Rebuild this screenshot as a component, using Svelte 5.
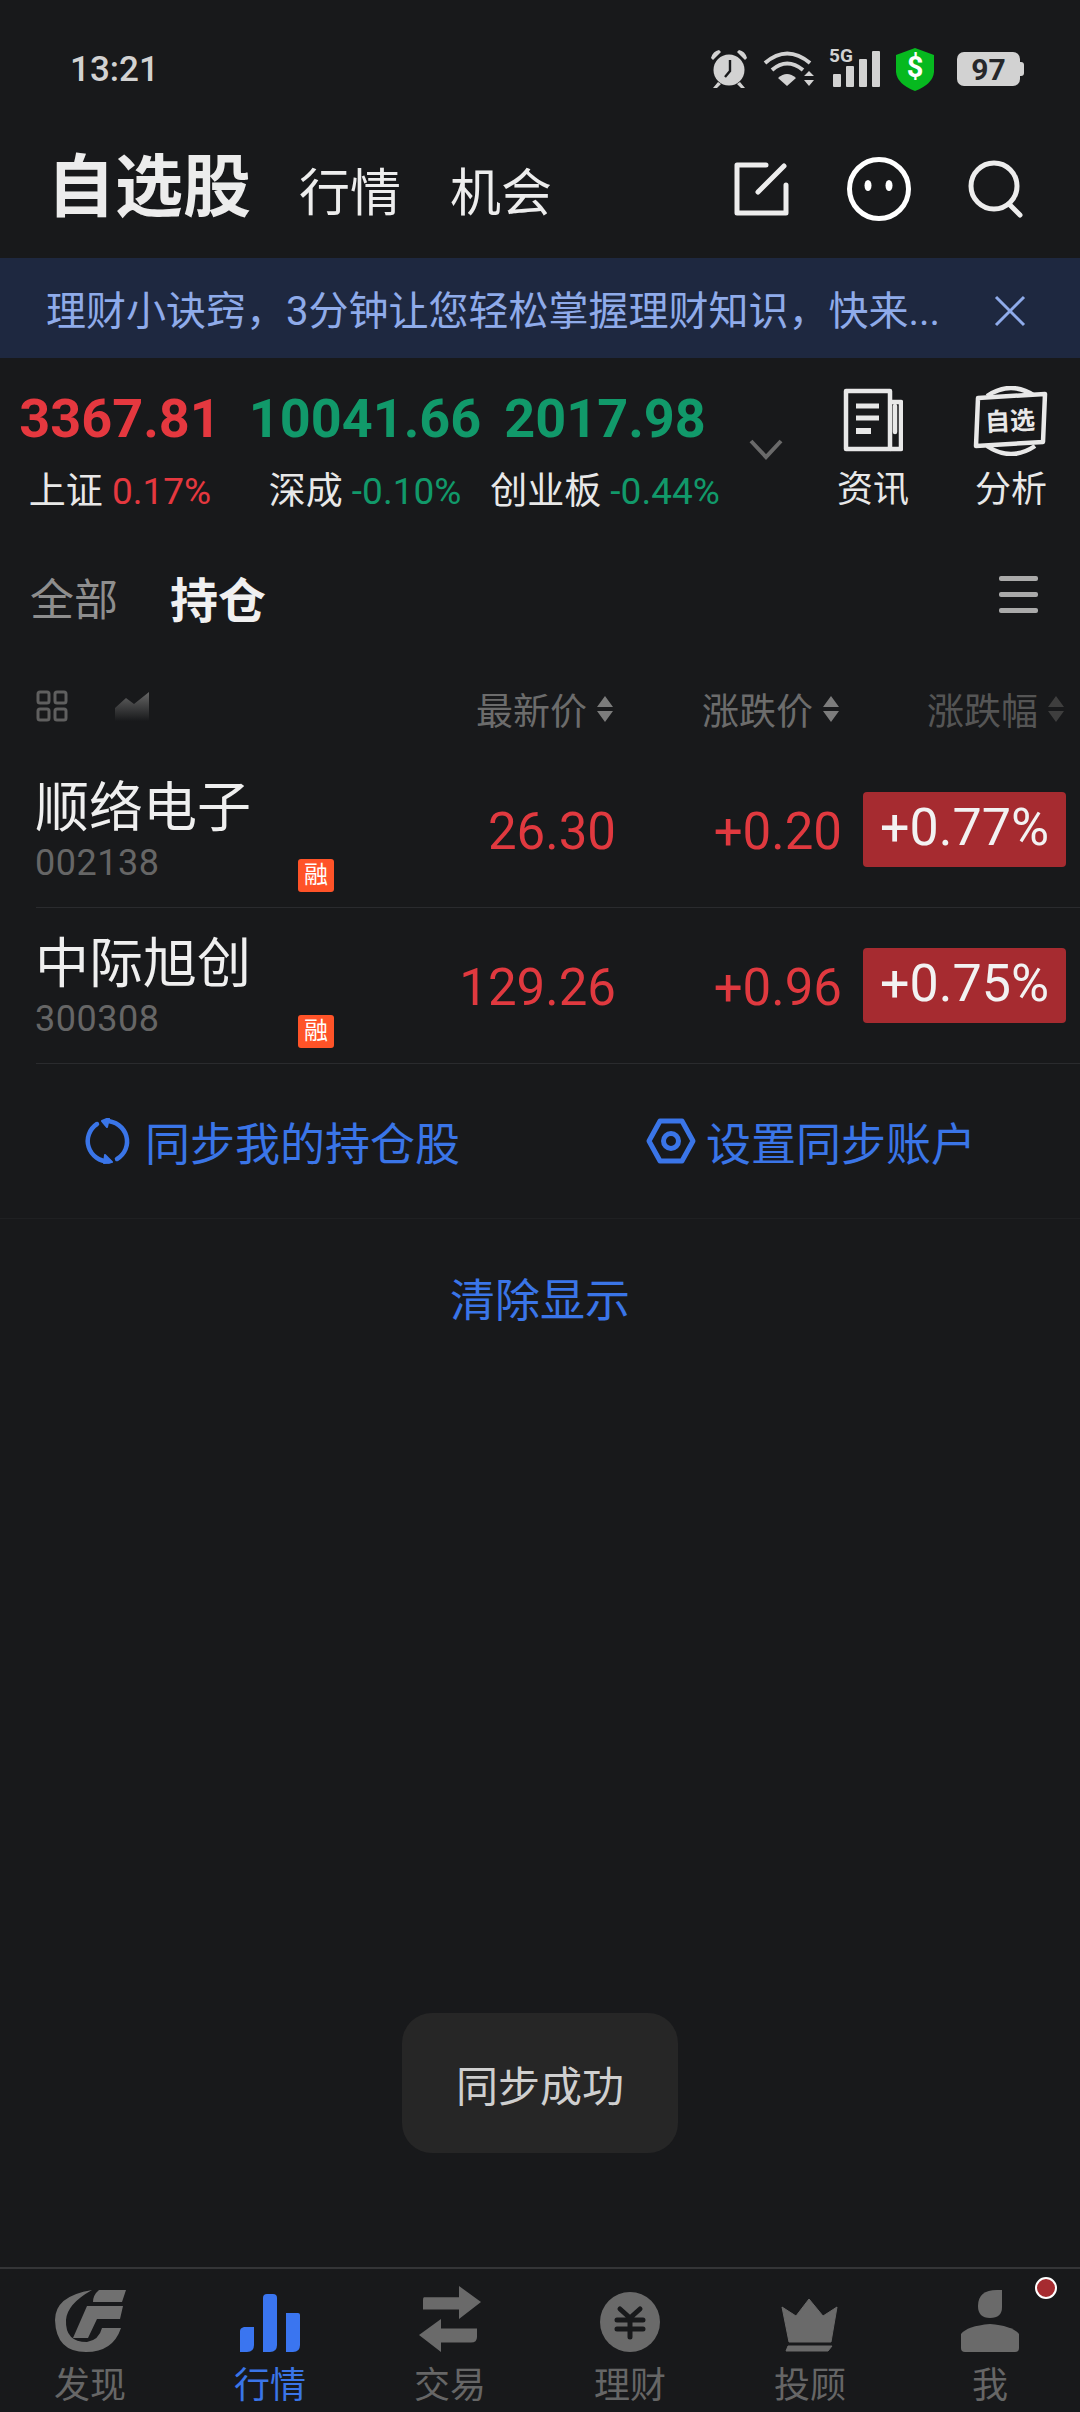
<script>
  const indices = [
    { value: '3367.81', name: '上证', pct: '0.17%', tone: 'up' },
    { value: '10041.66', name: '深成', pct: '-0.10%', tone: 'down' },
    { value: '2017.98', name: '创业板', pct: '-0.44%', tone: 'down' }
  ];
  const stocks = [
    { name: '顺络电子', code: '002138', price: '26.30', change: '+0.20', pct: '+0.77%' },
    { name: '中际旭创', code: '300308', price: '129.26', change: '+0.96', pct: '+0.75%' }
  ];
  const columns = ['最新价', '涨跌价', '涨跌幅'];
</script>

<div class="phone">
  <div class="status">
    <span class="time">13:21</span>
    <div class="status-icons">
      <svg width="38" height="40" viewBox="0 0 38 40" fill="#d2d2d2">
        <circle cx="19" cy="21" r="15.5" />
        <path d="M1 9 Q3 2 9 1 L11 3 L3 11Z M37 9 Q35 2 29 1 L27 3 L35 11Z" />
        <path d="M8 33 L3 39 L7 39 L11 35Z M30 33 L35 39 L31 39 L27 35Z" />
        <path d="M20 11 V22 L15 28" fill="none" stroke="#18191b" stroke-width="2.4" />
      </svg>
      <svg class="wifi" width="52" height="38" viewBox="0 0 52 38" fill="none" stroke="#d2d2d2" stroke-width="4">
        <path d="M2 13 Q24 -6 47 13" />
        <path d="M9 20 Q24 7 40 20" />
        <path d="M24 36 L15 28 Q24 20 33 28Z" fill="#d2d2d2" stroke="none" />
        <path d="M41 26 L46 21 L51 26Z M41 30 L51 30 L46 36Z" fill="#d2d2d2" stroke="none" />
      </svg>
      <div class="signal">
        <span class="five-g">5G</span>
        <i style="height:13px"></i><i style="height:21px"></i><i style="height:28px"></i><i style="height:36px"></i>
      </div>
      <svg class="shield" width="38" height="43" viewBox="0 0 38 43">
        <path d="M19 0 L38 7 V24 Q37 36 19 43 Q1 36 0 24 V7Z" fill="#06b91f" />
        <text x="19" y="29" text-anchor="middle" class="dollar">$</text>
      </svg>
      <div class="battery"><span>97</span></div>
    </div>
  </div>

  <header class="top">
    <h1>自选股</h1>
    <nav>
      <span>行情</span>
      <span>机会</span>
    </nav>
    <div class="top-icons">
      <svg width="56" height="54" viewBox="0 0 56 54" fill="none" stroke="#ededed" stroke-width="5" stroke-linecap="round" stroke-linejoin="round">
        <path d="M32 3 H3 V51 H52 V23" />
        <path d="M24 30 L50 4" />
      </svg>
      <svg class="face" width="66" height="66" viewBox="0 0 66 66">
        <circle cx="33" cy="33" r="29.5" fill="none" stroke="#fff" stroke-width="5" />
        <ellipse cx="22" cy="29.5" rx="3.5" ry="5.5" fill="#fff" />
        <ellipse cx="43" cy="29.5" rx="3.5" ry="5.5" fill="#fff" />
      </svg>
      <svg class="search" width="56" height="58" viewBox="0 0 56 58" fill="none" stroke="#ededed" stroke-width="5" stroke-linecap="round">
        <circle cx="26" cy="26" r="23" />
        <path d="M42 45 L52 55" />
      </svg>
    </div>
  </header>

  <div class="notice">
    <span class="notice-text">理财小诀窍，3分钟让您轻松掌握理财知识，快来...</span>
    <svg width="32" height="32" viewBox="0 0 32 32" fill="none" stroke="#8fabea" stroke-width="3">
      <path d="M2 2 L30 30 M30 2 L2 30" />
    </svg>
  </div>

  <section class="market">
    <div class="index-grid">
      {#each indices as item}
        <div class="index">
          <span class="value {item.tone}">{item.value}</span>
          <span class="label">{item.name} <em class={item.tone}>{item.pct}</em></span>
        </div>
      {/each}
    </div>
    <svg class="chevron" width="34" height="22" viewBox="0 0 34 22" fill="none" stroke="#6a6a6a" stroke-width="4">
      <path d="M2 3 L17 19 L32 3" />
    </svg>
    <div class="shortcut news">
      <svg width="60" height="64" viewBox="0 0 60 64" fill="none" stroke="#e8e8e8" stroke-width="4.5" stroke-linejoin="round">
        <path d="M3 3 H47 V61 H3Z" />
        <path d="M47 14 H58 V61 H47" />
        <path d="M52 18 V44" stroke-linecap="round" />
        <path d="M13 18 H36 M13 30 H36" stroke-width="5" />
        <path d="M13 43 H28" stroke-width="6" />
      </svg>
      <span>资讯</span>
    </div>
    <div class="shortcut">
      <svg width="76" height="70" viewBox="0 0 76 70" fill="none" stroke="#e8e8e8" stroke-width="4.5">
        <path d="M14 10 Q38 -6 62 10" />
        <path d="M14 60 Q38 76 62 60" />
        <path d="M5 12 L72 8 L70 56 L3 60Z" fill="#18191b" stroke-linejoin="round" />
        <text x="37" y="44" text-anchor="middle" class="badge-text" transform="rotate(-3 37 35)">自选</text>
      </svg>
      <span>分析</span>
    </div>
  </section>

  <div class="tabs">
    <span class="tab">全部</span>
    <span class="tab active">持仓</span>
    <div class="menu"><i></i><i></i><i></i></div>
  </div>

  <div class="table-head">
    <div class="head-tools">
      <svg width="32" height="32" viewBox="0 0 32 32" fill="none" stroke="#5f5f5f" stroke-width="3">
        <rect x="2" y="2" width="11" height="11" rx="2" />
        <rect x="19" y="2" width="11" height="11" rx="2" />
        <rect x="2" y="19" width="11" height="11" rx="2" />
        <rect x="19" y="19" width="11" height="11" rx="2" />
      </svg>
      <svg width="34" height="30" viewBox="0 0 34 30">
        <defs>
          <linearGradient id="spark" x1="0" y1="0" x2="0" y2="1">
            <stop offset="0" stop-color="#666" />
            <stop offset="1" stop-color="#666" stop-opacity="0" />
          </linearGradient>
        </defs>
        <path d="M0 17 L11 7 L19 13 L34 1 V30 H0Z" fill="url(#spark)" />
      </svg>
    </div>
    {#each columns as col, i}
      <div class="sort" class:dim={i === 2}>
        <span>{col}</span>
        <svg width="18" height="28" viewBox="0 0 18 28" fill="currentColor">
          <path d="M9 1 L17 12 H1Z M1 16 H17 L9 27Z" />
        </svg>
      </div>
    {/each}
  </div>

  {#each stocks as s}
    <div class="row">
      <div class="stock">
        <span class="stock-name">{s.name}</span>
        <span class="stock-code">{s.code}</span>
        <span class="rong">融</span>
      </div>
      <span class="num">{s.price}</span>
      <span class="num">{s.change}</span>
      <span class="pill">{s.pct}</span>
    </div>
  {/each}

  <div class="actions">
    <div class="action">
      <svg width="48" height="46" viewBox="0 0 48 46" fill="none" stroke="#3a75e8" stroke-width="4.5" stroke-linecap="round">
        <path d="M22 3 A21 20.5 0 0 1 33 41" />
        <path d="M13 6 A21 20.5 0 0 0 25 43.5" />
        <path d="M18 3 L25 0 L23 9Z M28 44 L21 37 L20 45Z" fill="#3a75e8" stroke-width="2" stroke-linejoin="round" />
      </svg>
      <span>同步我的持仓股</span>
    </div>
    <div class="action second">
      <svg width="50" height="46" viewBox="0 0 50 46" fill="none" stroke="#3a75e8" stroke-width="5" stroke-linejoin="round">
        <path d="M14 3 H36 L47 23 L36 43 H14 L3 23Z" />
        <circle cx="25" cy="23" r="7.5" />
      </svg>
      <span>设置同步账户</span>
    </div>
  </div>

  <div class="clear">清除显示</div>

  <div class="toast">同步成功</div>

  <nav class="tabbar">
    <div class="tabitem">
      <svg width="71" height="62" viewBox="0 0 71 62" fill="#707070">
        <path d="M37 0 Q0 6 0 30 Q1 62 31 62 Q58 62 66 38 H47 Q44 50 32 52 Q10 52 11 30 Q12 14 37 0Z" />
        <path d="M44 0 H71 L67 12 H38 Q38 5 44 0Z" />
        <path d="M32 16 H68 L65 29 H42 L33 48 H18Z" />
      </svg>
      <span>发现</span>
    </div>
    <div class="tabitem current">
      <svg width="60" height="58" viewBox="0 0 60 58" fill="#3a75f0">
        <path d="M0 37 Q0 34 4 33 L14 33 V51 Q14 58 7 58 H0Z" />
        <path d="M23 4 Q23 0 27 0 H33 Q37 0 37 4 V51 Q37 58 30 58 H23Z" />
        <path d="M46 19 H58 Q60 19 60 21 V51 Q60 58 53 58 H46Z" />
      </svg>
      <span>行情</span>
    </div>
    <div class="tabitem">
      <svg width="62" height="66" viewBox="0 0 62 70" preserveAspectRatio="none" fill="#6a6a6a">
        <path d="M5 12 H40 V0 L62 17 L40 35 V25 H4 V15 Q4 12 5 12Z" />
        <path d="M57 45 H22 V35 L0 52 L22 70 V60 H52 Q58 60 58 54 V45Z" />
      </svg>
      <span>交易</span>
    </div>
    <div class="tabitem">
      <svg width="60" height="60" viewBox="0 0 60 60">
        <circle cx="30" cy="30" r="30" fill="#6a6a6a" />
        <path d="M20 17 L30 26 L40 17 M17 28 H43 M17 37 H43 M30 26 V45" fill="none" stroke="#18191b" stroke-width="5" stroke-linecap="round" />
      </svg>
      <span>理财</span>
    </div>
    <div class="tabitem">
      <svg width="58" height="54" viewBox="0 0 58 54" fill="#6a6a6a" stroke="#6a6a6a" stroke-width="1" stroke-linejoin="round">
        <path d="M1 9 L15 18 L28 1 L42 18 L56 9 L50 44 H8Z" />
        <path d="M7 48 H51 L47 53 H5Z" />
      </svg>
      <span>投顾</span>
    </div>
    <div class="tabitem me">
      <svg width="58" height="62" viewBox="0 0 58 62" fill="#6a6a6a">
        <path d="M36 0 H41 V17 Q41 28 29 28 Q17 28 17 16 Q17 0 36 0Z" />
        <path d="M0 44 Q6 36 29 34 Q52 36 58 44 V58 Q58 62 54 62 H4 Q0 62 0 58Z" />
      </svg>
      <span>我</span>
      <b class="dot"></b>
    </div>
  </nav>
</div>

<style>
  :global(body) {
    margin: 0;
    background: #18191b;
  }

  .phone {
    position: relative;
    width: 1080px;
    height: 2412px;
    display: flex;
    flex-direction: column;
    overflow: hidden;
    background: #18191b;
    font-family: Roboto, "Noto Sans CJK SC", sans-serif;
    color: #ededed;
  }

  .status {
    height: 120px;
    padding: 18px 60px 0 70px;
    display: flex;
    align-items: center;
    justify-content: space-between;
    box-sizing: border-box;
  }

  .time {
    font-size: 35px;
    font-weight: 500;
    color: #d2d2d2;
  }

  .status-icons {
    display: flex;
    align-items: center;
  }

  .wifi {
    margin-left: 15px;
  }

  .signal {
    position: relative;
    width: 47px;
    height: 36px;
    margin-left: 18px;
    display: flex;
    align-items: flex-end;
    gap: 5px;
  }

  .signal i {
    width: 8px;
    background: #d2d2d2;
    border-radius: 1px;
  }

  .five-g {
    position: absolute;
    left: -4px;
    top: -5px;
    font-size: 19px;
    line-height: 20px;
    font-weight: 700;
    color: #d2d2d2;
  }

  .shield {
    margin-left: 16px;
  }

  .dollar {
    font: 700 29px Roboto, sans-serif;
    fill: #fff;
  }

  .battery {
    position: relative;
    width: 63px;
    height: 34px;
    margin-left: 23px;
    background: #d2d2d2;
    border-radius: 7px;
    display: flex;
    align-items: center;
    justify-content: center;
  }

  .battery::after {
    content: '';
    position: absolute;
    right: -4px;
    top: 10px;
    width: 4px;
    height: 14px;
    background: #d2d2d2;
    border-radius: 0 3px 3px 0;
  }

  .battery span {
    font-size: 30px;
    font-weight: 700;
    color: #26272a;
  }

  .top {
    height: 138px;
    padding: 0 56px 0 47px;
    display: flex;
    align-items: center;
    box-sizing: border-box;
  }

  h1 {
    margin: 0 0 2px;
    font-size: 68px;
    font-weight: 700;
    color: #ececec;
    line-height: 1;
  }

  .top nav {
    margin-left: 48px;
    display: flex;
    gap: 49px;
    font-size: 51px;
  }

  .top-icons {
    margin-left: auto;
    display: flex;
    align-items: center;
  }

  .face {
    margin-left: 56px;
  }

  .search {
    margin-left: 56px;
  }

  .notice {
    height: 100px;
    padding: 0 54px 0 46px;
    background: #1e2840;
    display: flex;
    align-items: center;
    justify-content: space-between;
    color: #8fabea;
  }

  .notice svg {
    margin-top: 5px;
  }

  .notice-text {
    font-size: 40px;
    white-space: nowrap;
  }

  .market {
    height: 184px;
    display: flex;
    align-items: flex-start;
    padding-left: 20px;
    position: relative;
  }

  .index-grid {
    display: grid;
    grid-template-columns: 225px 240px 240px;
    padding-top: 30px;
  }

  .index {
    display: flex;
    flex-direction: column;
    align-items: center;
    white-space: nowrap;
  }

  .index:first-child {
    padding-right: 25px;
  }

  .value {
    font-size: 54px;
    font-weight: 700;
    line-height: 62px;
  }

  .label {
    margin-top: 18px;
    font-size: 37px;
    line-height: 48px;
    color: #e8e8e8;
  }

  .label em {
    font-style: normal;
  }

  .up {
    color: #e5383f;
  }

  .down {
    color: #11996a;
  }

  .chevron {
    margin: 80px 0 0 24px;
  }

  .shortcut {
    position: absolute;
    top: 28px;
    left: 973px;
    width: 76px;
    display: flex;
    flex-direction: column;
    align-items: center;
    font-size: 36px;
    color: #e8e8e8;
    line-height: 48px;
  }

  .shortcut.news {
    left: 835px;
    padding-top: 2px;
  }

  .shortcut span {
    white-space: nowrap;
    margin-top: 10px;
  }

  .news span {
    margin-top: 14px;
  }

  .badge-text {
    font: 700 25px "Noto Sans CJK SC", sans-serif;
    fill: #e8e8e8;
    stroke: none;
  }

  .tabs {
    height: 110px;
    padding: 0 42px 0 30px;
    display: flex;
    align-items: center;
    gap: 52px;
  }

  .tab {
    font-size: 44px;
    color: #8e8e8e;
  }

  .tab.active {
    font-size: 48px;
    font-weight: 700;
    color: #f0f0f0;
  }

  .menu {
    margin-left: auto;
    margin-top: -6px;
    display: flex;
    flex-direction: column;
    gap: 11px;
  }

  .menu i {
    width: 39px;
    height: 5px;
    border-radius: 2px;
    background: #aaa;
  }

  .table-head {
    height: 100px;
    display: grid;
    grid-template-columns: 350px 229px 226px 225px;
    padding: 13px 0 0 36px;
    align-items: center;
    color: #6c6c6c;
    font-size: 37px;
    box-sizing: border-box;
  }

  .head-tools {
    display: flex;
    align-items: center;
    gap: 47px;
    margin-top: -5px;
  }

  .sort {
    display: flex;
    align-items: center;
    justify-content: flex-end;
    gap: 9px;
    padding-right: 1px;
  }

  .sort svg {
    color: #7c7c7c;
  }

  .sort.dim {
    color: #555;
  }

  .sort.dim svg {
    color: #3e3e3e;
  }

  .row {
    height: 156px;
    margin-left: 36px;
    display: grid;
    grid-template-columns: 350px 230px 226px 224px;
    align-items: center;
    border-bottom: 1px solid #2a2b2e;
    box-sizing: border-box;
  }

  .stock {
    position: relative;
    display: flex;
    flex-direction: column;
    margin-left: -1px;
    padding-top: 3px;
  }

  .stock-name {
    font-size: 54px;
    line-height: 60px;
    color: #efefef;
  }

  .stock-code {
    margin-top: 3px;
    font-size: 36px;
    line-height: 42px;
    color: #666;
    letter-spacing: 0.5px;
  }

  .rong {
    position: absolute;
    left: 263px;
    bottom: -8px;
    width: 36px;
    height: 33px;
    border-radius: 3px;
    background: #ff5328;
    color: #fff;
    font-size: 24px;
    line-height: 32px;
    text-align: center;
  }

  .num {
    text-align: right;
    font-size: 51px;
    color: #e0393f;
    padding-top: 4px;
  }

  .pill {
    justify-self: end;
    width: 203px;
    height: 75px;
    background: #a62b30;
    border-radius: 4px;
    text-align: center;
    font-size: 52px;
    line-height: 72px;
    color: #f2f2f2;
  }

  .actions {
    height: 155px;
    padding-left: 84px;
    display: flex;
    align-items: center;
    border-bottom: 1px solid #1f2022;
    color: #3a75e8;
    font-size: 45px;
    box-sizing: border-box;
  }

  .action {
    display: flex;
    align-items: center;
    gap: 13px;
  }

  .action.second {
    margin-left: auto;
    margin-right: 104px;
    gap: 10px;
  }

  .clear {
    margin-top: 56px;
    text-align: center;
    font-size: 45px;
    line-height: 54px;
    color: #3a75e8;
  }

  .toast {
    position: absolute;
    left: 402px;
    top: 2013px;
    width: 276px;
    height: 140px;
    border-radius: 30px;
    background: #262626;
    color: #cfcfcf;
    font-size: 42px;
    display: flex;
    align-items: center;
    justify-content: center;
  }

  .tabbar {
    margin-top: auto;
    height: 145px;
    border-top: 2px solid #343537;
    display: grid;
    grid-template-columns: repeat(6, 1fr);
    box-sizing: border-box;
  }

  .tabitem {
    position: relative;
    height: 143px;
    display: flex;
    flex-direction: column;
    align-items: center;
    justify-content: flex-end;
    font-size: 36px;
    color: #666;
  }

  .tabitem span {
    line-height: 44px;
    margin: 4px 0 4px;
  }

  .tabitem svg {
    position: absolute;
    bottom: 60px;
  }

  .current {
    color: #3a75e8;
  }

  .dot {
    position: absolute;
    right: 23px;
    top: 8px;
    width: 18px;
    height: 18px;
    background: #a62b30;
    border: 2px solid #fff;
    border-radius: 50%;
  }
</style>
